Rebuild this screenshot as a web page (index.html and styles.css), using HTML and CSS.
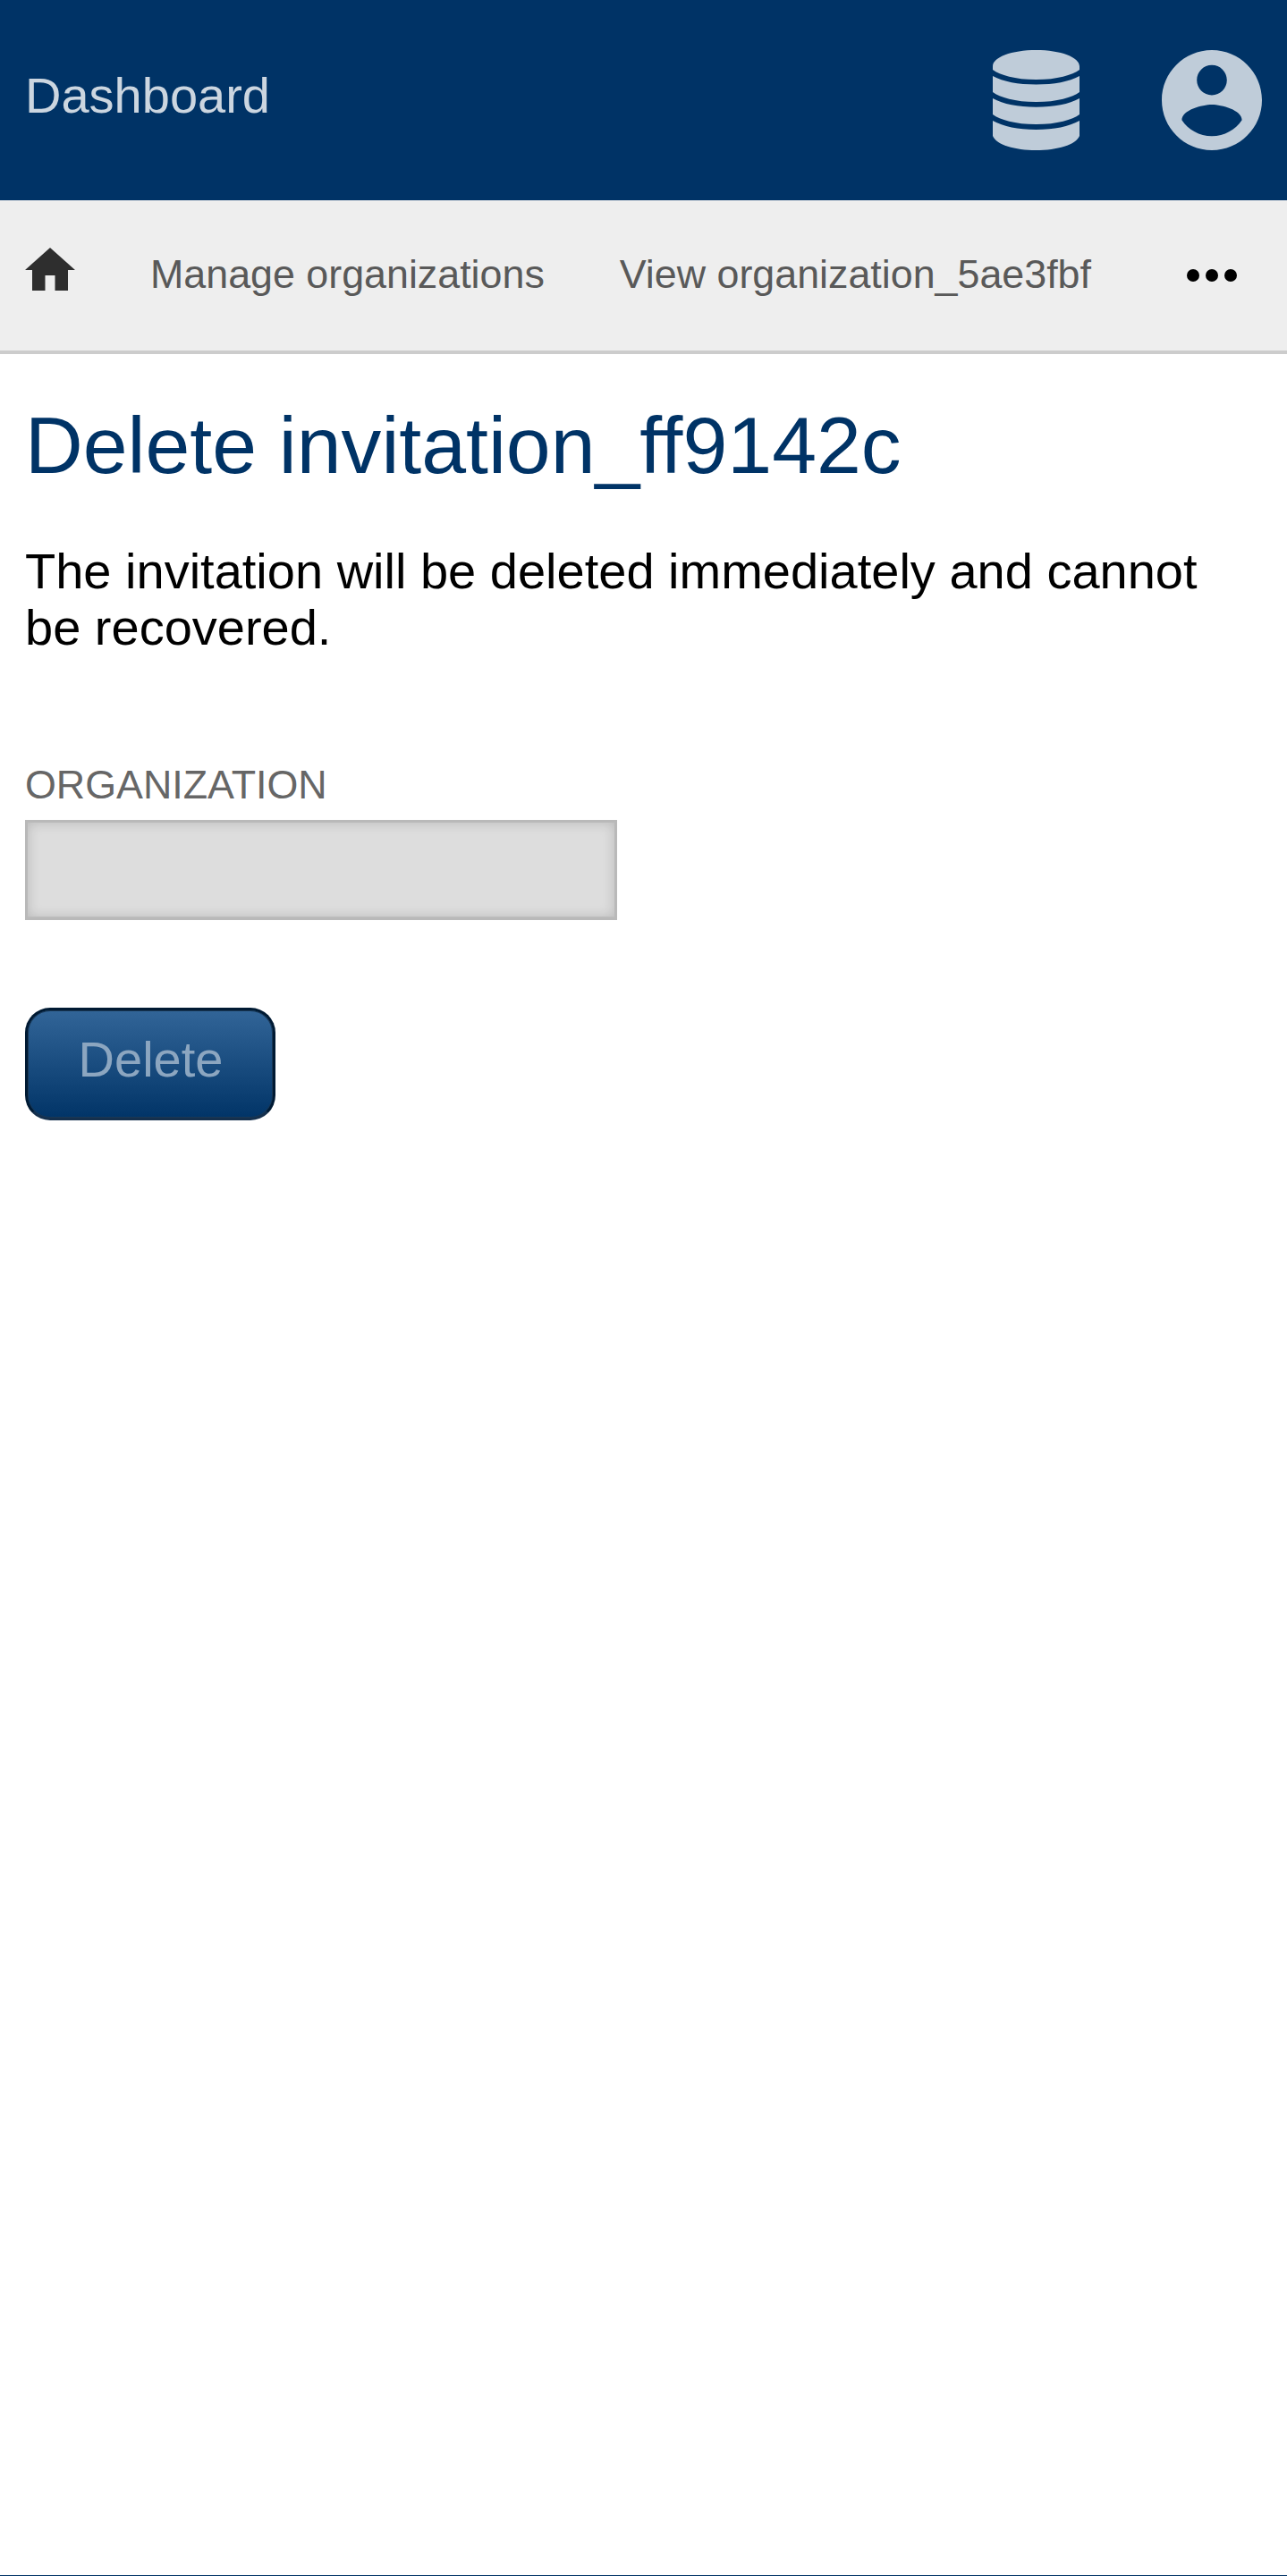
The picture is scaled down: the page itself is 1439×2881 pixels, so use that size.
FILE: index.html
```html
<!DOCTYPE html>
<html lang="en">
<head>
<meta charset="utf-8">
<title>Delete invitation</title>
<link rel="stylesheet" href="styles.css">
</head>
<body>
<header class="topbar">
  <a class="brand">Dashboard</a>
  <div class="tools">
    <svg class="icon-db" viewBox="0 0 97 112"><path d="M0 18C0 8 21 0 48.500 0S97 8 97 18V22C89 28 72 33 48.500 33S8 28 0 22ZM0 29C12 35.500 28 38.500 48.500 38.500S85 35.500 97 29V47C89 53 72 58 48.500 58S8 53 0 47ZM0 54C12 60.500 28 63.700 48.500 63.700S85 60.500 97 54V72C89 78 72 83 48.500 83S8 78 0 72ZM0 79C12 85.500 28 89 48.500 89S85 85.500 97 79V96C93 106 72 112 48.500 112S4 106 0 96Z"/></svg>
    <svg class="icon-user" viewBox="2 2 20 20"><path d="M12 2C6.480 2 2 6.480 2 12s4.480 10 10 10 10-4.480 10-10S17.520 2 12 2zm0 3c1.660 0 3 1.340 3 3s-1.340 3-3 3-3-1.340-3-3 1.340-3 3-3zm0 14.200c-2.500 0-4.710-1.280-6-3.220.03-1.990 4-3.080 6-3.080 1.990 0 5.970 1.090 6 3.080-1.290 1.940-3.500 3.220-6 3.220z"/></svg>
  </div>
</header>
<nav class="crumbs">
  <svg class="icon-home" viewBox="0 0 56 48"><path d="M28 0 56 25H48V48H33.500V31H22.500V48H8V25H0Z"/></svg>
  <a>Manage organizations</a>
  <a>View organization_5ae3fbf</a>
  <svg class="icon-more" viewBox="0 0 56 14"><circle cx="7" cy="7" r="7"/><circle cx="28" cy="7" r="7"/><circle cx="49" cy="7" r="7"/></svg>
</nav>
<main class="content">
  <h1>Delete invitation_ff9142c</h1>
  <p>The invitation will be deleted immediately and cannot be recovered.</p>
  <form>
    <label for="org">ORGANIZATION</label>
    <input id="org" type="text" disabled>
    <button type="button">Delete</button>
  </form>
</main>
<footer class="footer"></footer>
</body>
</html>
```
FILE: styles.css
```css
* { box-sizing: border-box; }
body {
  margin: 0;
  height: 2881px;
  display: flex;
  flex-direction: column;
  overflow: hidden;
  background: #fff;
  color: #000;
  font: 56px/63px "Liberation Sans", Arial, sans-serif;
}
.topbar {
  flex: none;
  height: 224px;
  padding: 0 28px;
  display: flex;
  justify-content: space-between;
  align-items: center;
  background: #003366;
}
.brand { color: #ccd6e0; padding-bottom: 11px; }
.tools { display: flex; gap: 92px; }
.tools svg { height: 112px; fill: #bfccd9; }
.icon-db { width: 97px; }
.icon-user { width: 112px; }
.crumbs {
  flex: none;
  height: 172px;
  padding: 0 28px;
  display: flex;
  align-items: flex-start;
  background: #eee;
  border-bottom: 4px solid #ccc;
  color: #595959;
  font-size: 44.8px;
}
.crumbs a { margin: 51px 0 0 84px; }
.icon-home { width: 56px; height: 48px; margin-top: 53px; fill: #2e2e2e; }
.icon-more { width: 56px; height: 14px; margin: 77px 28px 0 auto; }
.content { flex: 1; padding: 51px 28px 0; }
h1 {
  margin: 0;
  color: #003366;
  font-size: 89.6px;
  line-height: 103px;
  font-weight: 400;
}
p { margin: 57px 0 0; }
form { display: flex; flex-direction: column; align-items: flex-start; }
label {
  margin-top: 118px;
  color: #666;
  font-size: 44.8px;
  line-height: 52px;
}
input {
  width: 662px;
  height: 112px;
  margin-top: 14px;
  border: 3px solid #b9b9b9;
  background: #ddd;
  box-shadow: inset 0 -1px #bebebe, inset 0 0 14px rgba(0, 0, 0, 0.17);
}
button {
  width: 280px;
  height: 126px;
  margin-top: 98px;
  padding: 0 0 11px 1px;
  border: 3px solid #001a33;
  border-bottom-color: #15304d;
  border-radius: 28px;
  background: linear-gradient(#336699, #003366) border-box;
  box-shadow: inset 0 0 0 1px #1a3855;
  color: #8ca6c0;
  font: inherit;
}
.footer { flex: none; height: 1px; background: #003366; }
```
